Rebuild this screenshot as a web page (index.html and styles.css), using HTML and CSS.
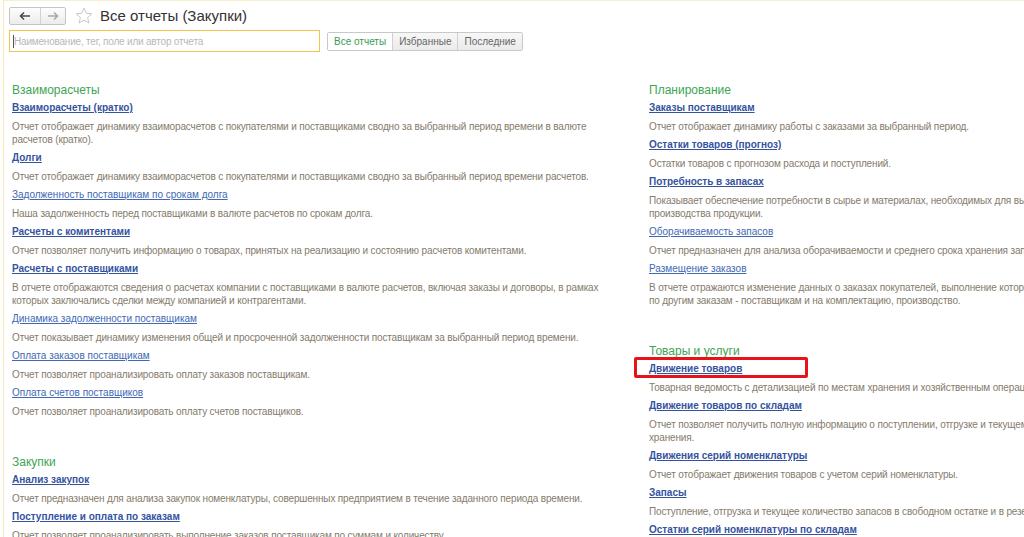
FILE: index.html
```html
<!DOCTYPE html>
<html>
<head>
    <meta charset="UTF-8">
    <title>Все отчеты (Закупки)</title>
    <link rel="stylesheet" href="styles.css">
</head>
<body>

<div class="window">

    <div class="toolbar">
        <div class="nav">
            <span class="nav-btn back">
                <svg width="12" height="10" viewBox="0 0 12 10"><path d="M11 5H2M5 1.5L1.5 5 5 8.5" fill="none" stroke="#4a4a4a" stroke-width="1.6"/></svg>
            </span>
            <span class="nav-btn fwd">
                <svg width="12" height="10" viewBox="0 0 12 10"><path d="M1 5h9M7 1.5L10.5 5 7 8.5" fill="none" stroke="#a8a8a8" stroke-width="1.6"/></svg>
            </span>
        </div>
        <svg class="star" width="18" height="18" viewBox="0 0 18 18"><path d="M9 1.2l2.3 5.1 5.5.5-4.2 3.7 1.3 5.5L9 13.1 4.1 16l1.3-5.5L1.2 6.8l5.5-.5z" fill="none" stroke="#c9c9c9" stroke-width="1"/></svg>
        <h1 class="title">Все отчеты (Закупки)</h1>
    </div>

    <div class="searchbar">
        <div class="search"><span class="caret"></span><span class="placeholder">Наименование, тег, поле или автор отчета</span></div>
        <div class="tabs">
            <span class="tab cur">Все отчеты</span><span class="tab">Избранные</span><span class="tab">Последние</span>
        </div>
    </div>

    <div class="reports">

        <div class="col">
            <div class="group">
                <h2>Взаиморасчеты</h2>
                <div class="item"><a href="#" class="strong">Взаиморасчеты (кратко)</a><p>Отчет отображает динамику взаиморасчетов с покупателями и поставщиками сводно за выбранный период времени в валюте расчетов (кратко).</p></div>
                <div class="item"><a href="#" class="strong">Долги</a><p>Отчет отображает динамику взаиморасчетов с покупателями и поставщиками сводно за выбранный период времени расчетов.</p></div>
                <div class="item"><a href="#">Задолженность поставщикам по срокам долга</a><p>Наша задолженность перед поставщиками в валюте расчетов по срокам долга.</p></div>
                <div class="item"><a href="#" class="strong">Расчеты с комитентами</a><p>Отчет позволяет получить информацию о товарах, принятых на реализацию и состоянию расчетов комитентами.</p></div>
                <div class="item"><a href="#" class="strong">Расчеты с поставщиками</a><p>В отчете отображаются сведения о расчетах компании с поставщиками в валюте расчетов, включая заказы и договоры, в рамках которых заключались сделки между компанией и контрагентами.</p></div>
                <div class="item"><a href="#">Динамика задолженности поставщикам</a><p>Отчет показывает динамику изменения общей и просроченной задолженности поставщикам за выбранный период времени.</p></div>
                <div class="item"><a href="#">Оплата заказов поставщикам</a><p>Отчет позволяет проанализировать оплату заказов поставщикам.</p></div>
                <div class="item"><a href="#">Оплата счетов поставщиков</a><p>Отчет позволяет проанализировать оплату счетов поставщиков.</p></div>
            </div>
            <div class="group">
                <h2>Закупки</h2>
                <div class="item"><a href="#" class="strong">Анализ закупок</a><p>Отчет предназначен для анализа закупок номенклатуры, совершенных предприятием в течение заданного периода времени.</p></div>
                <div class="item"><a href="#" class="strong">Поступление и оплата по заказам</a><p>Отчет позволяет проанализировать выполнение заказов поставщикам по суммам и количеству.</p></div>
            </div>
        </div>

        <div class="col">
            <div class="group">
                <h2>Планирование</h2>
                <div class="item"><a href="#" class="strong">Заказы поставщикам</a><p>Отчет отображает динамику работы с заказами за выбранный период.</p></div>
                <div class="item"><a href="#" class="strong">Остатки товаров (прогноз)</a><p>Остатки товаров с прогнозом расхода и поступлений.</p></div>
                <div class="item"><a href="#" class="strong">Потребность в запасах</a><p>Показывает обеспечение потребности в сырье и материалах, необходимых для выполнения заказов клиентов и плана<br>производства продукции.</p></div>
                <div class="item"><a href="#">Оборачиваемость запасов</a><p>Отчет предназначен для анализа оборачиваемости и среднего срока хранения запасов на складах.</p></div>
                <div class="item"><a href="#">Размещение заказов</a><p>В отчете отражаются изменение данных о заказах покупателей, выполнение которых обеспечивается<br>по другим заказам - поставщикам и на комплектацию, производство.</p></div>
            </div>
            <div class="group">
                <h2>Товары и услуги</h2>
                <div class="item marked"><a href="#" class="strong">Движение товаров</a><span class="mark"></span><p>Товарная ведомость с детализацией по местам хранения и хозяйственным операциям.</p></div>
                <div class="item"><a href="#" class="strong">Движение товаров по складам</a><p>Отчет позволяет получить полную информацию о поступлении, отгрузке и текущем остатке товаров в местах<br>хранения.</p></div>
                <div class="item"><a href="#" class="strong">Движения серий номенклатуры</a><p>Отчет отображает движения товаров с учетом серий номенклатуры.</p></div>
                <div class="item"><a href="#" class="strong">Запасы</a><p>Поступление, отгрузка и текущее количество запасов в свободном остатке и в резерве.</p></div>
                <div class="item"><a href="#" class="strong">Остатки серий номенклатуры по складам</a><p>Отчет отображает остатки серий номенклатуры по складам.</p></div>
            </div>
        </div>

    </div>

</div>

</body>
</html>
```

FILE: styles.css
```css
* {
    margin: 0;
    padding: 0;
    box-sizing: border-box;
}

body {
    font: 10px/13px "Liberation Sans", Arial, sans-serif;
    background: #fff;
    width: 1024px;
    height: 537px;
    overflow: hidden;
    padding-left: 3px;
}

a {
    color: #3b5aa6;
}

.window {
    height: 537px;
    border-left: 1px solid #f3eab8;
    border-top: 1px solid #f7f0cc;
    padding: 6px 0 0 5px;
}

/* header */

.toolbar {
    display: flex;
    align-items: center;
    height: 18px;
}

.nav {
    display: flex;
    width: 57px;
    height: 18px;
    border: 1px solid #c4c4c4;
    border-radius: 2px;
    background: linear-gradient(#fdfdfd, #ececec);
}

.nav-btn {
    display: flex;
    align-items: center;
    justify-content: center;
}

.nav-btn.back {
    width: 31px;
    border-right: 1px solid #d2d2d2;
}

.nav-btn.fwd {
    flex: 1;
}

.star {
    margin-left: 9px;
}

.title {
    margin-left: 7px;
    font-size: 15px;
    font-weight: normal;
    color: #333;
    line-height: 18px;
}

.searchbar {
    display: flex;
    align-items: center;
    margin-top: 5px;
}

.search {
    display: flex;
    align-items: center;
    width: 311px;
    height: 22px;
    border: 1px solid #f2c34f;
    padding-left: 3px;
}

.caret {
    width: 1px;
    height: 13px;
    background: #555;
}

.placeholder {
    color: #b8b8b8;
    letter-spacing: -0.2px;
}

.tabs {
    display: flex;
    margin-left: 7px;
    border: 1px solid #c9c9c9;
    border-radius: 2px;
}

.tab {
    height: 17px;
    line-height: 17px;
    padding: 0 6px;
    color: #666;
    background: linear-gradient(#f7f7f7, #ebebeb);
    border-left: 1px solid #d0d0d0;
}

.tab:first-child {
    border-left: 0;
}

.tab.cur {
    color: #3a9a54;
    background: #fff;
}

/* report list */

.reports {
    display: grid;
    grid-template-columns: 610px 720px;
    column-gap: 27px;
    margin-top: 29px;
    padding-left: 3px;
}

.group {
    margin-bottom: 35px;
}

.group h2 {
    font-size: 12px;
    line-height: 19px;
    font-weight: normal;
    color: #3da553;
}

.item {
    margin-bottom: 4px;
}

.item a {
    display: inline-block;
    line-height: 16px;
    margin-bottom: 4px;
    color: #4168b4;
}

.item a.strong {
    font-weight: bold;
    color: #34539f;
}

.item p {
    color: #857b6c;
    letter-spacing: -0.15px;
}

.marked {
    position: relative;
}

.mark {
    position: absolute;
    left: -15px;
    top: -4px;
    width: 174px;
    height: 21px;
    border: 3px solid #e8121b;
    border-radius: 2px;
}
```
